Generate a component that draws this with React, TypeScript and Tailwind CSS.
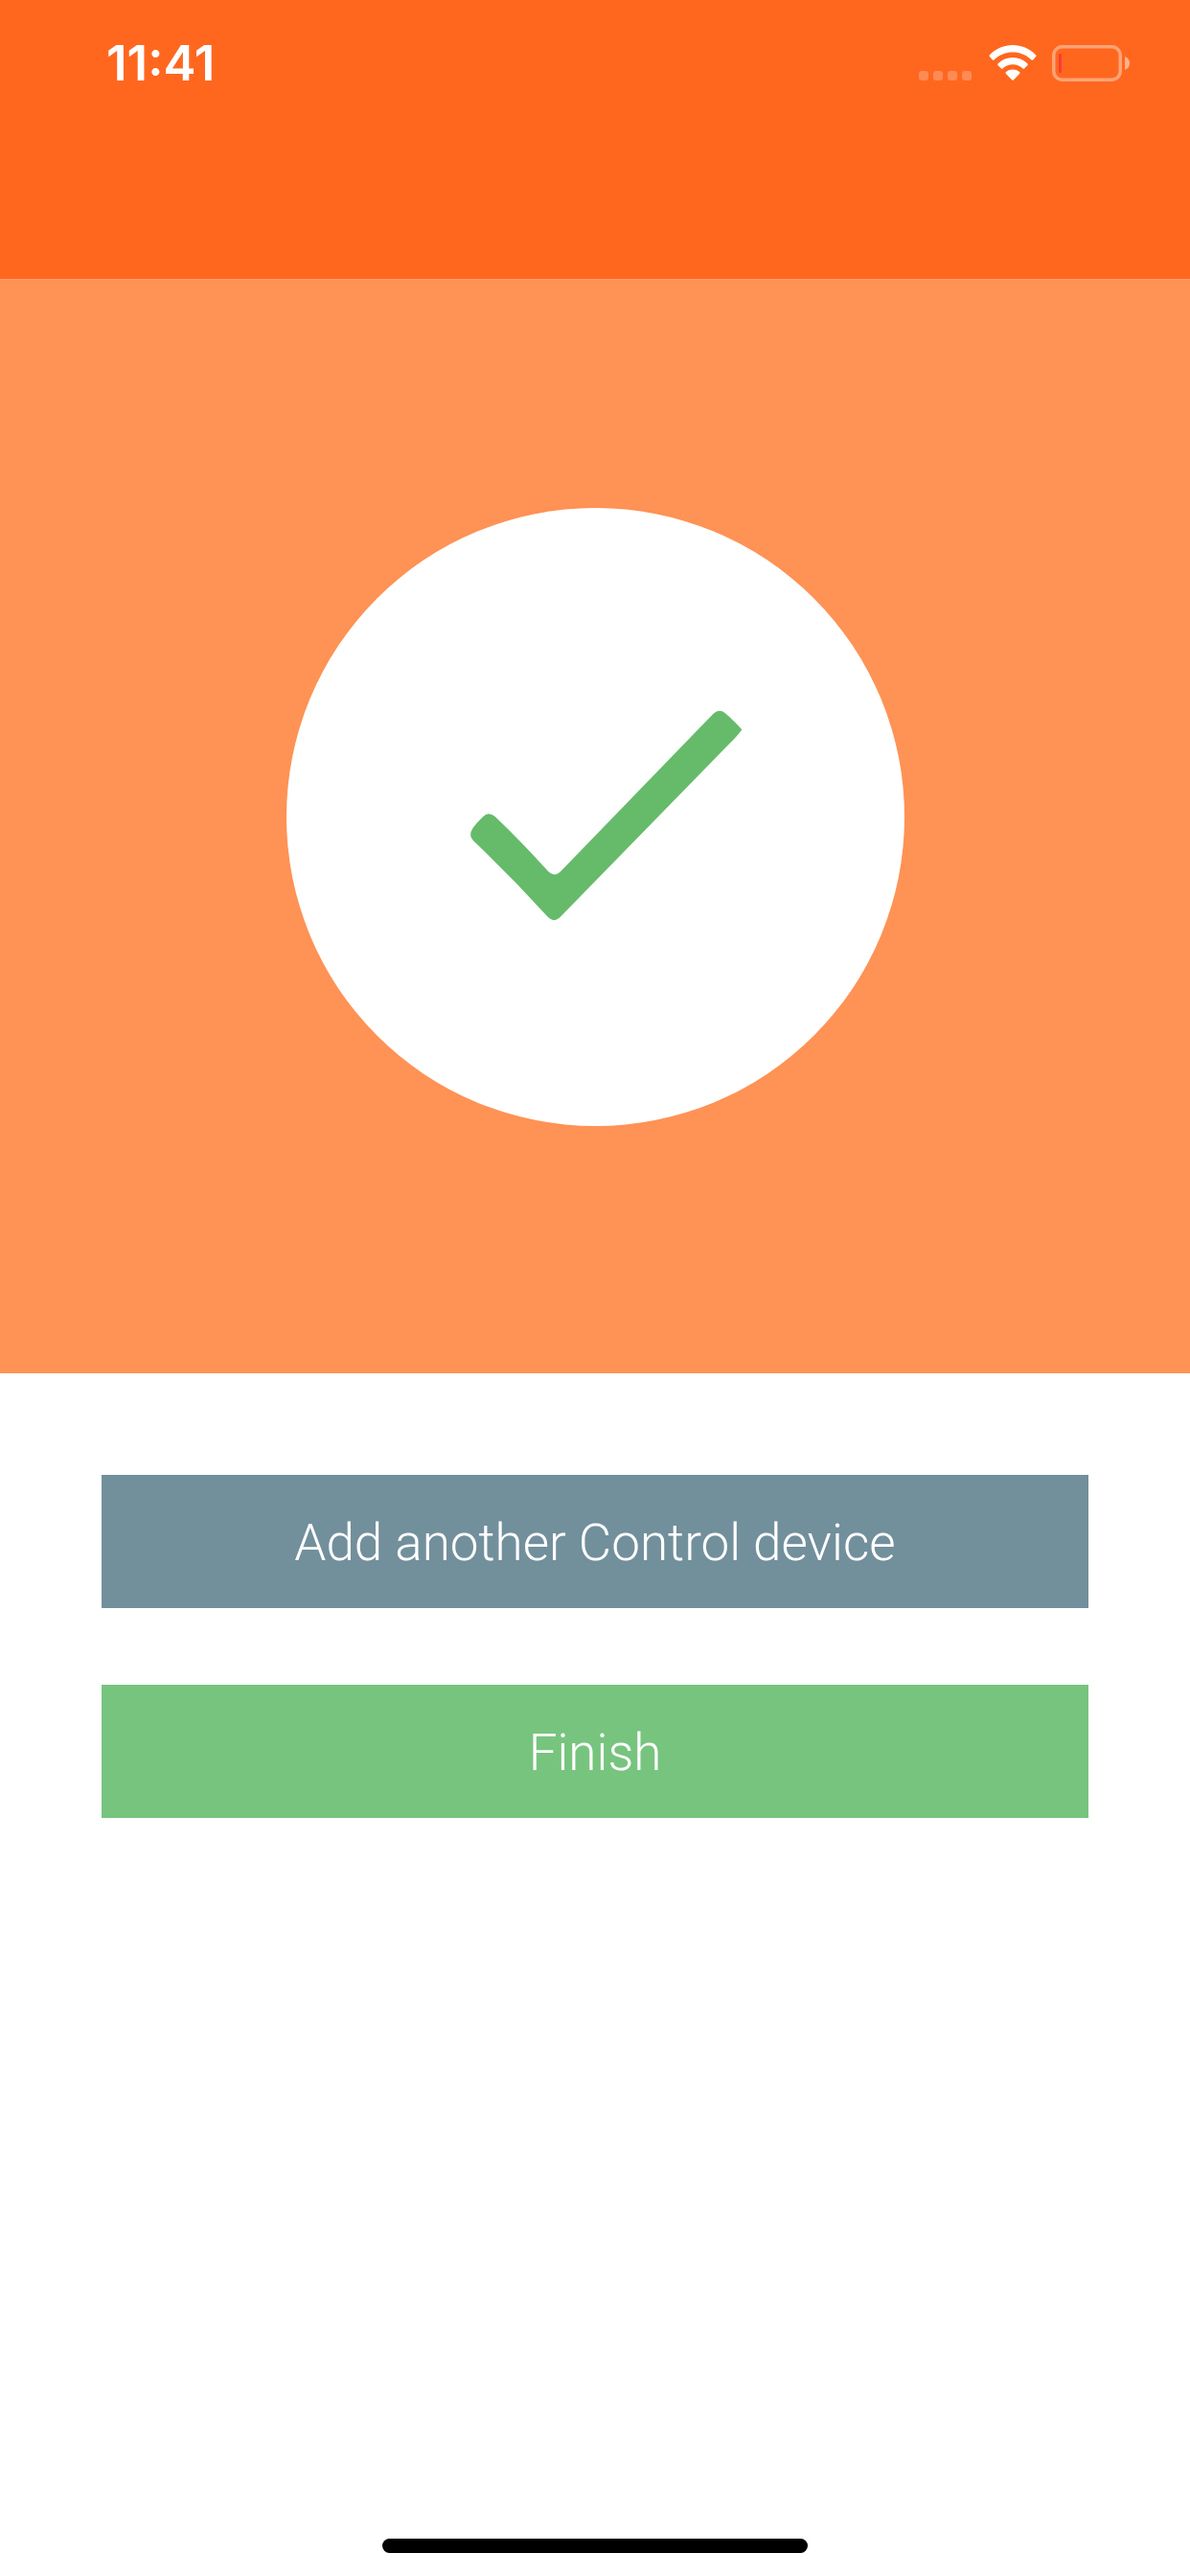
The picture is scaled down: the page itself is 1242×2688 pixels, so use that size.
import type { ReactNode } from 'react';

const SIGNAL_DOTS = [0, 1, 2, 3];

function WifiIcon() {
  return (
    <svg viewBox="0 0 150 111" className="h-[37px] w-[50px]" fill="#fff" aria-label="Wi-Fi">
      <path d="M3 31C43-10 107-10 147 31q3 3 0 6l-8 9q-3 3-6 0C100 15 50 15 17 46q-3 3-6 0L3 37q-3-3 0-6Z" />
      <path d="M29 58c26-25 66-25 92 0q3 3 0 6l-9 9q-3 3-6 0c-18-16-44-16-62 0q-3 3-6 0l-9-9q-3-3 0-6Z" />
      <path d="M54 84c12-10 30-10 42 0q3 3 0 6L78 109q-3 3-6 0L54 90q-3-3 0-6Z" />
    </svg>
  );
}

function BatteryIcon() {
  return (
    <svg viewBox="0 0 82 38" className="h-[38px] w-[82px]" aria-label="Battery low">
      <rect x="1.75" y="1.75" width="69.5" height="34.5" rx="9" fill="none" stroke="#ffa376" strokeWidth="3.5" />
      <rect x="7" y="9" width="3" height="20" rx="1" fill="#ff3b30" />
      <path d="M76 12q5 2 5 7t-5 7Z" fill="#ffb28c" />
    </svg>
  );
}

function StatusBar() {
  return (
    <div className="flex items-start justify-between pt-[47px] pr-[62px] pl-[111px]">
      <time className="font-['Inter',sans-serif] text-[51px] leading-[38px] font-semibold text-white">11:41</time>
      <div className="flex items-start gap-4">
        <div className="flex items-end gap-[18px]">
          <div className="flex gap-[5px]" aria-label="No signal">
            {SIGNAL_DOTS.map((dot) => (
              <span key={dot} className="size-[10px] rounded-[3px] bg-[#ff8a54]" />
            ))}
          </div>
          <WifiIcon />
        </div>
        <BatteryIcon />
      </div>
    </div>
  );
}

function SuccessBadge() {
  return (
    <div className="size-[645px] rounded-full bg-white">
      <svg viewBox="0 0 645 645" className="size-full" role="img" aria-label="Success">
        <g transform="translate(170 190) scale(.3333)">
          <path
            fill="#66bb6a"
            d="M74 431Q88 413 106 396Q123 379 143 396Q225 474 304 562Q328 592 353 563L821 80Q843 55 863 72Q890 94 916 124Q908 136 892 153L352 706Q328 735 304 706Q195 586 75 472Q58 456 74 431Z"
          />
        </g>
      </svg>
    </div>
  );
}

interface ActionButtonProps {
  className: string;
  children: ReactNode;
}

function ActionButton({ className, children }: ActionButtonProps) {
  return (
    <button
      type="button"
      className={`h-[139px] w-full pt-1 text-center font-['Roboto',sans-serif] text-[53px] font-light text-white ${className}`}
    >
      {children}
    </button>
  );
}

export default function App() {
  return (
    <div className="flex min-h-screen flex-col bg-white">
      <header className="h-[291px] bg-[#ff671f]">
        <StatusBar />
      </header>

      <section className="flex justify-center border-t border-[#ff9f6e] bg-[#ff9255] pt-[238px] pb-[258px]">
        <SuccessBadge />
      </section>

      <main className="flex flex-col gap-20 px-[106px] pt-[106px]">
        <ActionButton className="bg-[#728f9c]">Add another Control device</ActionButton>
        <ActionButton className="bg-[#77c47e]">Finish</ActionButton>
      </main>

      {/* home indicator */}
      <div className="mt-auto flex justify-center pb-6">
        <div className="h-[15px] w-[444px] rounded-full bg-black" />
      </div>
    </div>
  );
}
